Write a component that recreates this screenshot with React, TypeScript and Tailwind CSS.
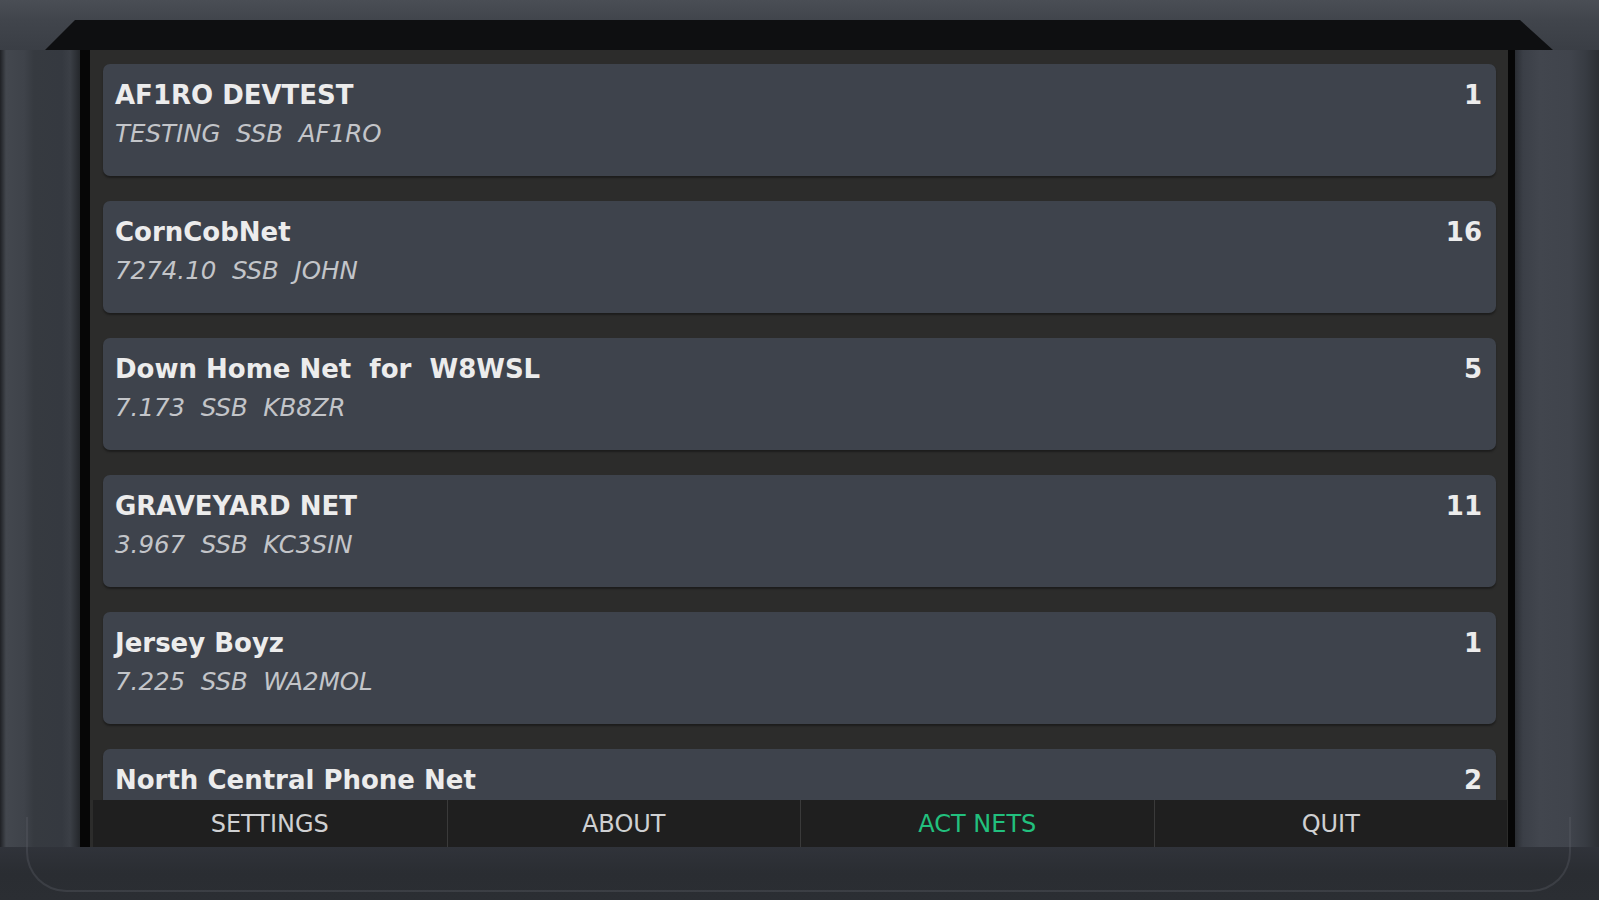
import React from 'react';

interface Net {
  name: string;
  info: string;
  count: number;
}

// last row is cut by the tab bar, its second line never shows
const NETS: Net[] = [
  { name: 'AF1RO DEVTEST', info: 'TESTING  SSB  AF1RO', count: 1 },
  { name: 'CornCobNet', info: '7274.10  SSB  JOHN', count: 16 },
  { name: 'Down Home Net  for  W8WSL', info: '7.173  SSB  KB8ZR', count: 5 },
  { name: 'GRAVEYARD NET', info: '3.967  SSB  KC3SIN', count: 11 },
  { name: 'Jersey Boyz', info: '7.225  SSB  WA2MOL', count: 1 },
  { name: 'North Central Phone Net', info: '', count: 2 },
];

const TABS = ['SETTINGS', 'ABOUT', 'ACT NETS', 'QUIT'];
const ACTIVE_TAB = 'ACT NETS';

function NetCard({ net }: { net: Net }) {
  return (
    <li className="h-[112px] shrink-0 rounded-[7px] bg-[#3e434c] shadow-[0_2px_2px_rgba(0,0,0,0.35)] pl-[12px] pr-[14px] pt-[13px] flex justify-between">
      <div>
        <div className="text-[26px] leading-[36px] font-bold text-[#ececec] whitespace-pre">{net.name}</div>
        {net.info && (
          <div className="mt-[6px] text-[24.5px] leading-[30px] italic text-[#c3c5c9] whitespace-pre">{net.info}</div>
        )}
      </div>
      <div className="text-[26px] leading-[36px] font-bold text-[#ececec]">{net.count}</div>
    </li>
  );
}

export default function App() {
  return (
    <div className="w-[1599px] h-[900px] overflow-hidden flex flex-col bg-[#3c4047] font-['DejaVu_Sans',sans-serif]">
      {/* top of the frame */}
      <div className="h-[20px] bg-gradient-to-b from-[#4a4e55] to-[#41454c]" />
      <div className="h-[30px] flex bg-gradient-to-b from-[#41454c] to-[#3a3e45]">
        <div className="w-[45px]" />
        <div className="flex-1 bg-[#0e0f11] [clip-path:polygon(30px_0,calc(100%-33px)_0,100%_100%,0_100%)]" />
        <div className="w-[46px]" />
      </div>

      <div className="h-[797px] flex">
        <div className="w-[80px] bg-[linear-gradient(to_right,#1f2125_0px,#43474e_6px,#3f434a_24px,#363a40_34px,#353940_62px,#3b3f46_70px,#24272b_80px)]" />
        <div className="w-[10px] bg-[#060606]" />

        <main className="w-[1418px] flex flex-col bg-[#2c2c2b]">
          <ul className="h-[750px] overflow-hidden pt-[14px] pl-[13px] pr-[12px] flex flex-col gap-[25px]">
            {NETS.map((n) => (
              <NetCard key={n.name} net={n} />
            ))}
          </ul>
          <nav className="h-[47px] ml-[3px] mr-[1px] grid grid-cols-4 bg-[#1f1f1f]">
            {TABS.map((t, i) => (
              <div
                key={t}
                className={
                  'flex items-center justify-center text-[24px] ' +
                  (i > 0 ? 'border-l border-[#3a3a3a] ' : '') +
                  (t === ACTIVE_TAB ? 'text-[#22c07e]' : 'text-[#cfd0d2]')
                }
              >
                {t}
              </div>
            ))}
          </nav>
        </main>

        <div className="w-[7px] bg-[#060606]" />
        <div className="w-[84px] bg-[linear-gradient(to_right,#2a2d32_0px,#3b3f47_8px,#42464e_25px,#40444c_55px,#383c43_70px,#2c2f34_84px)]" />
      </div>

      {/* bottom of the frame */}
      <div className="h-[53px] relative bg-gradient-to-b from-[#30333a] via-[#2a2d32] to-[#2b2e33]">
        <div className="absolute left-[26px] right-[28px] top-[-30px] bottom-[8px] rounded-b-[40px] border-2 border-t-0 border-[#5c6067]/35 pointer-events-none" />
      </div>
    </div>
  );
}
